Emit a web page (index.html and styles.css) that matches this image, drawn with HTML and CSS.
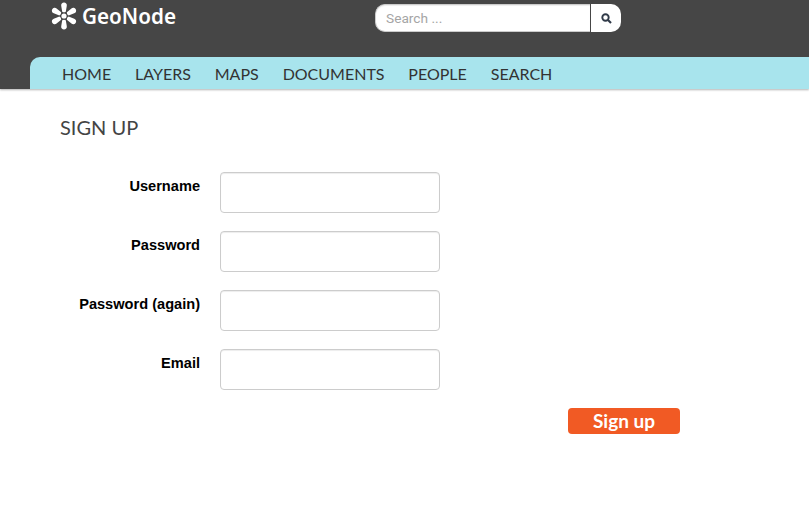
FILE: index.html
```html
<!DOCTYPE html>
<html lang="en">
<head>
<meta charset="utf-8">
<title>Sign up - GeoNode</title>
<link rel="stylesheet" href="styles.css">
</head>
<body>
<header class="header">
  <div class="topbar">
    <a class="brand">
      <svg class="brand-mark" width="28" height="28" viewBox="-14 -14 28 28" fill="#fff">
        <defs><path id="petal" d="M-1.8 -4.3L-2.8 -10.2A2.85 2.85 0 1 1 2.8 -10.2L1.8 -4.3Q0 -3 -1.8 -4.3Z"/></defs>
        <circle r="2.6"/>
        <use href="#petal"/>
        <use href="#petal" transform="rotate(60)"/>
        <use href="#petal" transform="rotate(120)"/>
        <use href="#petal" transform="rotate(180)"/>
        <use href="#petal" transform="rotate(240)"/>
        <use href="#petal" transform="rotate(300)"/>
      </svg>
      <svg class="brand-name" width="98" height="28"><text x="0" y="22" textLength="94" lengthAdjust="spacingAndGlyphs">GeoNode</text></svg>
    </a>
    <form class="search">
      <input class="search-input" type="text" placeholder="Search ...">
      <button class="search-button" type="button" aria-label="Search">
        <svg width="11" height="11" viewBox="0 0 11 11" fill="none" stroke="#303a48"><circle cx="4.5" cy="4.5" r="3.2" stroke-width="1.9"/><path d="M6.8 6.8L10 10" stroke-width="2.1"/></svg>
      </button>
    </form>
  </div>
  <nav class="nav">
    <a>HOME</a><a>LAYERS</a><a>MAPS</a><a>DOCUMENTS</a><a>PEOPLE</a><a>SEARCH</a>
  </nav>
</header>
<main class="content">
  <h2 class="title">SIGN UP</h2>
  <form class="form">
    <div class="row"><label for="user">Username</label><input id="user" type="text"></div>
    <div class="row"><label for="pass">Password</label><input id="pass" type="password"></div>
    <div class="row"><label for="again">Password (again)</label><input id="again" type="password"></div>
    <div class="row"><label for="email">Email</label><input id="email" type="text"></div>
    <div class="actions"><button class="submit" type="button">Sign up</button></div>
  </form>
</main>
</body>
</html>
```
FILE: styles.css
```css
* { box-sizing: border-box; }
body { margin: 0; background: #fff; font-family: "Liberation Sans", Arial, sans-serif; overflow: hidden; }
.header { height: 89px; background: #464646; box-shadow: 0 1px 2px rgba(0, 0, 0, .3); }
.topbar { display: flex; height: 57px; padding-left: 50px; align-items: flex-start; }
.brand { display: flex; width: 325px; padding-top: 2px; }
.brand-name { margin-left: 4px; overflow: visible; }
.brand-name text { font: 600 21px "Noto Sans", sans-serif; fill: #fff; }
.search { display: flex; gap: 1px; padding-top: 4px; }
.search-input { width: 215px; height: 28px; padding: 0 10px; border: 1px solid #ccc; border-right: 0; border-radius: 10px 0 0 10px; font: 13.7px Roboto, Arial, sans-serif; background: #fff; box-shadow: inset 0 1px 1px rgba(0, 0, 0, .075); }
.search-input::placeholder { color: #a5a5a5; opacity: 1; }
.search-button { display: flex; width: 30px; height: 28px; padding: 0; border: 0; border-radius: 0 10px 10px 0; background: #fff; align-items: center; justify-content: center; }
.nav { display: flex; gap: 23.9px; height: 32px; margin-left: 30px; padding-left: 32px; border-radius: 10px 0 0 0; background: #a8e4ed; color: #333; font: 16px/34px Lato, sans-serif; }
.content { padding: 26px 0 0 60px; }
.title { margin: 0; color: #444; font: 400 20px/24px Lato, sans-serif; }
.form { width: 620px; margin-top: 33px; }
.row { display: flex; gap: 20px; height: 41px; margin-bottom: 18px; }
.row label { width: 140px; padding-top: 4px; text-align: right; color: #000; font: bold 14.6px/20px "Liberation Sans", Arial, sans-serif; }
.row input { width: 220px; height: 41px; padding: 4px 6px; border: 1px solid #ccc; border-radius: 4px; background: #fff; box-shadow: inset 0 1px 1px rgba(0, 0, 0, .075); }
.actions { display: flex; justify-content: flex-end; }
.submit { width: 112px; height: 26px; padding: 0; border: 0; border-radius: 4px; background: #f15a24; color: #fff; font: bold 19px/26px Lato, sans-serif; }
```
